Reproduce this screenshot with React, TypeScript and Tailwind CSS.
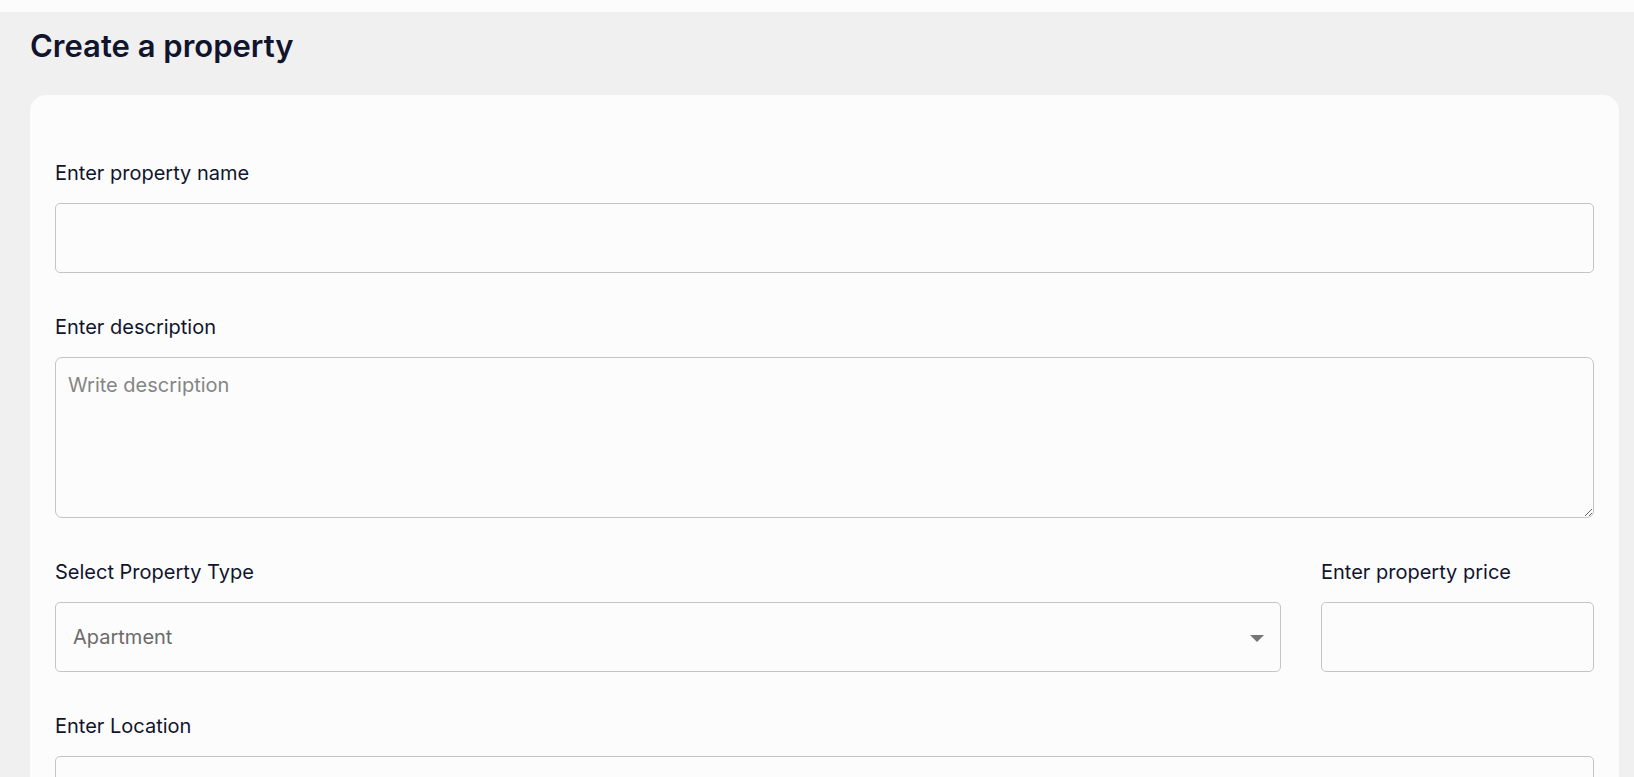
import React from "react";

const font = { fontFamily: "Inter, 'Noto Sans', sans-serif" };

function Label({ children }: { children: React.ReactNode }) {
  return (
    <div className="mb-[18px] text-[20px] leading-[24px] font-normal text-[#11142d] whitespace-nowrap">
      {children}
    </div>
  );
}

export default function App() {
  return (
    <div className="min-h-screen bg-[#f0f0f0] overflow-hidden" style={font}>
      <div className="h-[12px] bg-[#fcfcfc]" />
      <div className="pl-[30px] pt-[15px]">
        <h1 className="text-[31px] leading-[38px] font-semibold text-[#11142d]">
          Create a property
        </h1>
      </div>
      <div className="ml-[30px] mr-[15px] mt-[30px] rounded-[16px] bg-[#fcfcfc] px-[25px] pt-[66px] pb-[40px]">
        <div className="flex flex-col gap-[42px]">
          <div className="flex flex-col">
            <Label>Enter property name</Label>
            <input
              type="text"
              className="h-[70px] w-full rounded-[5px] border border-[#c4c4c4] bg-transparent px-[14px] text-[20px] outline-none"
            />
          </div>
          <div className="flex flex-col">
            <Label>Enter description</Label>
            <textarea
              placeholder="Write description"
              className="block h-[161px] w-full rounded-[7px] border border-[#c4c4c4] bg-transparent px-[12px] py-[12px] text-[20px] leading-normal text-[#858585] placeholder:text-[#858585] outline-none"
            />
          </div>
          <div className="flex gap-[40px]">
            <div className="flex flex-1 flex-col">
              <Label>Select Property Type</Label>
              <div className="flex h-[70px] items-center justify-between rounded-[5px] border border-[#c4c4c4] pl-[17px] pr-[16px]">
                <span className="text-[20px] text-[#6b6b6b]">Apartment</span>
                <svg width="14" height="7" viewBox="0 0 14 7" className="mt-[2px]">
                  <path d="M0 0 L14 0 L7 7 Z" fill="#757575" />
                </svg>
              </div>
            </div>
            <div className="flex w-[273px] flex-col">
              <Label>Enter property price</Label>
              <input
                type="number"
                className="h-[70px] w-full rounded-[5px] border border-[#c4c4c4] bg-transparent px-[14px] text-[20px] outline-none"
              />
            </div>
          </div>
          <div className="flex flex-col">
            <Label>Enter Location</Label>
            <input
              type="text"
              className="h-[70px] w-full rounded-[5px] border border-[#c4c4c4] bg-transparent px-[14px] text-[20px] outline-none"
            />
          </div>
        </div>
      </div>
    </div>
  );
}
